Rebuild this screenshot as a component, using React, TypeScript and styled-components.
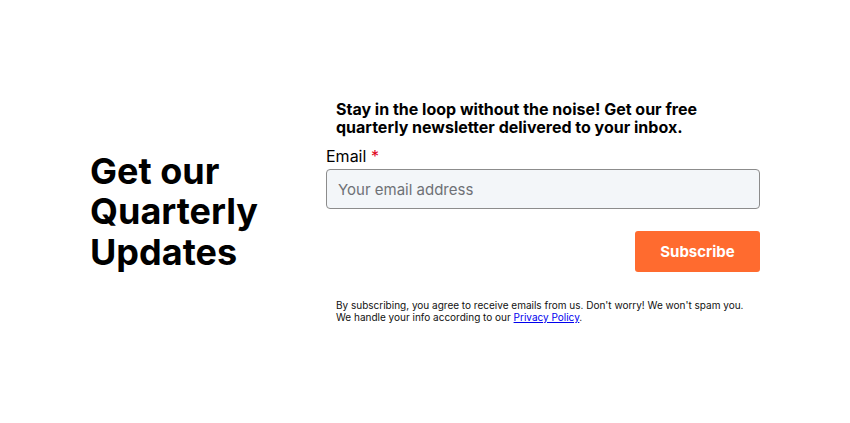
import React from "react";
import styled, { createGlobalStyle } from "styled-components";

const Global = createGlobalStyle`
  html, body { margin: 0; padding: 0; background: #fff; }
  body { font-family: Inter, "Noto Sans", sans-serif; color: #000; }
`;

const Page = styled.div`
  min-height: 423px;
  display: flex;
  align-items: center;
  justify-content: center;
`;

const Wrap = styled.section`
  width: 670px;
  display: flex;
  align-items: center;
`;

const Left = styled.div`
  width: 236px;
  flex: none;
`;

const Heading = styled.h2`
  margin: 0;
  font-size: 36px;
  line-height: 40.5px;
  font-weight: 700;
`;

const Right = styled.form`
  flex: 1;
  display: flex;
  flex-direction: column;
`;

const Intro = styled.p`
  margin: 0 0 11px;
  padding: 0 10px;
  font-size: 16px;
  line-height: 18px;
  font-weight: 700;
`;

const Label = styled.label`
  font-size: 16px;
  line-height: 19px;
  margin-bottom: 3px;
`;

const Req = styled.span`
  color: #e0001b;
`;

const Input = styled.input`
  box-sizing: border-box;
  height: 40px;
  width: 100%;
  border: 1px solid #8c8c8c;
  border-radius: 4px;
  background: #f3f6f9;
  padding: 0 11px;
  font-family: inherit;
  font-size: 15px;
  color: #000;
  &::placeholder { color: #6e7176; }
`;

const ButtonRow = styled.div`
  display: flex;
  justify-content: flex-end;
  margin-top: 22px;
`;

const Button = styled.button`
  height: 41px;
  width: 125px;
  border: none;
  border-radius: 3px;
  background: #ff6b2f;
  color: #fff;
  font-family: inherit;
  font-size: 15px;
  font-weight: 700;
`;

const Fine = styled.p`
  margin: 27px 0 0;
  padding: 0 10px;
  font-size: 10px;
  line-height: 12px;
  color: #111;
`;

const Link = styled.a`
  color: #0000ee;
  text-decoration: underline;
`;

export default function App() {
  return (
    <>
      <Global />
      <Page>
        <Wrap>
          <Left>
            <Heading>
              Get our
              <br />
              Quarterly
              <br />
              Updates
            </Heading>
          </Left>
          <Right onSubmit={(e) => e.preventDefault()}>
            <Intro>
              Stay in the loop without the noise! Get our free quarterly
              newsletter delivered to your inbox.
            </Intro>
            <Label htmlFor="email">
              Email <Req>*</Req>
            </Label>
            <Input id="email" type="email" placeholder="Your email address" />
            <ButtonRow>
              <Button type="submit">Subscribe</Button>
            </ButtonRow>
            <Fine>
              By subscribing, you agree to receive emails from us. Don't worry!
              We won't spam you.
              <br />
              We handle your info according to our{" "}
              <Link href="#">Privacy Policy</Link>.
            </Fine>
          </Right>
        </Wrap>
      </Page>
    </>
  );
}
